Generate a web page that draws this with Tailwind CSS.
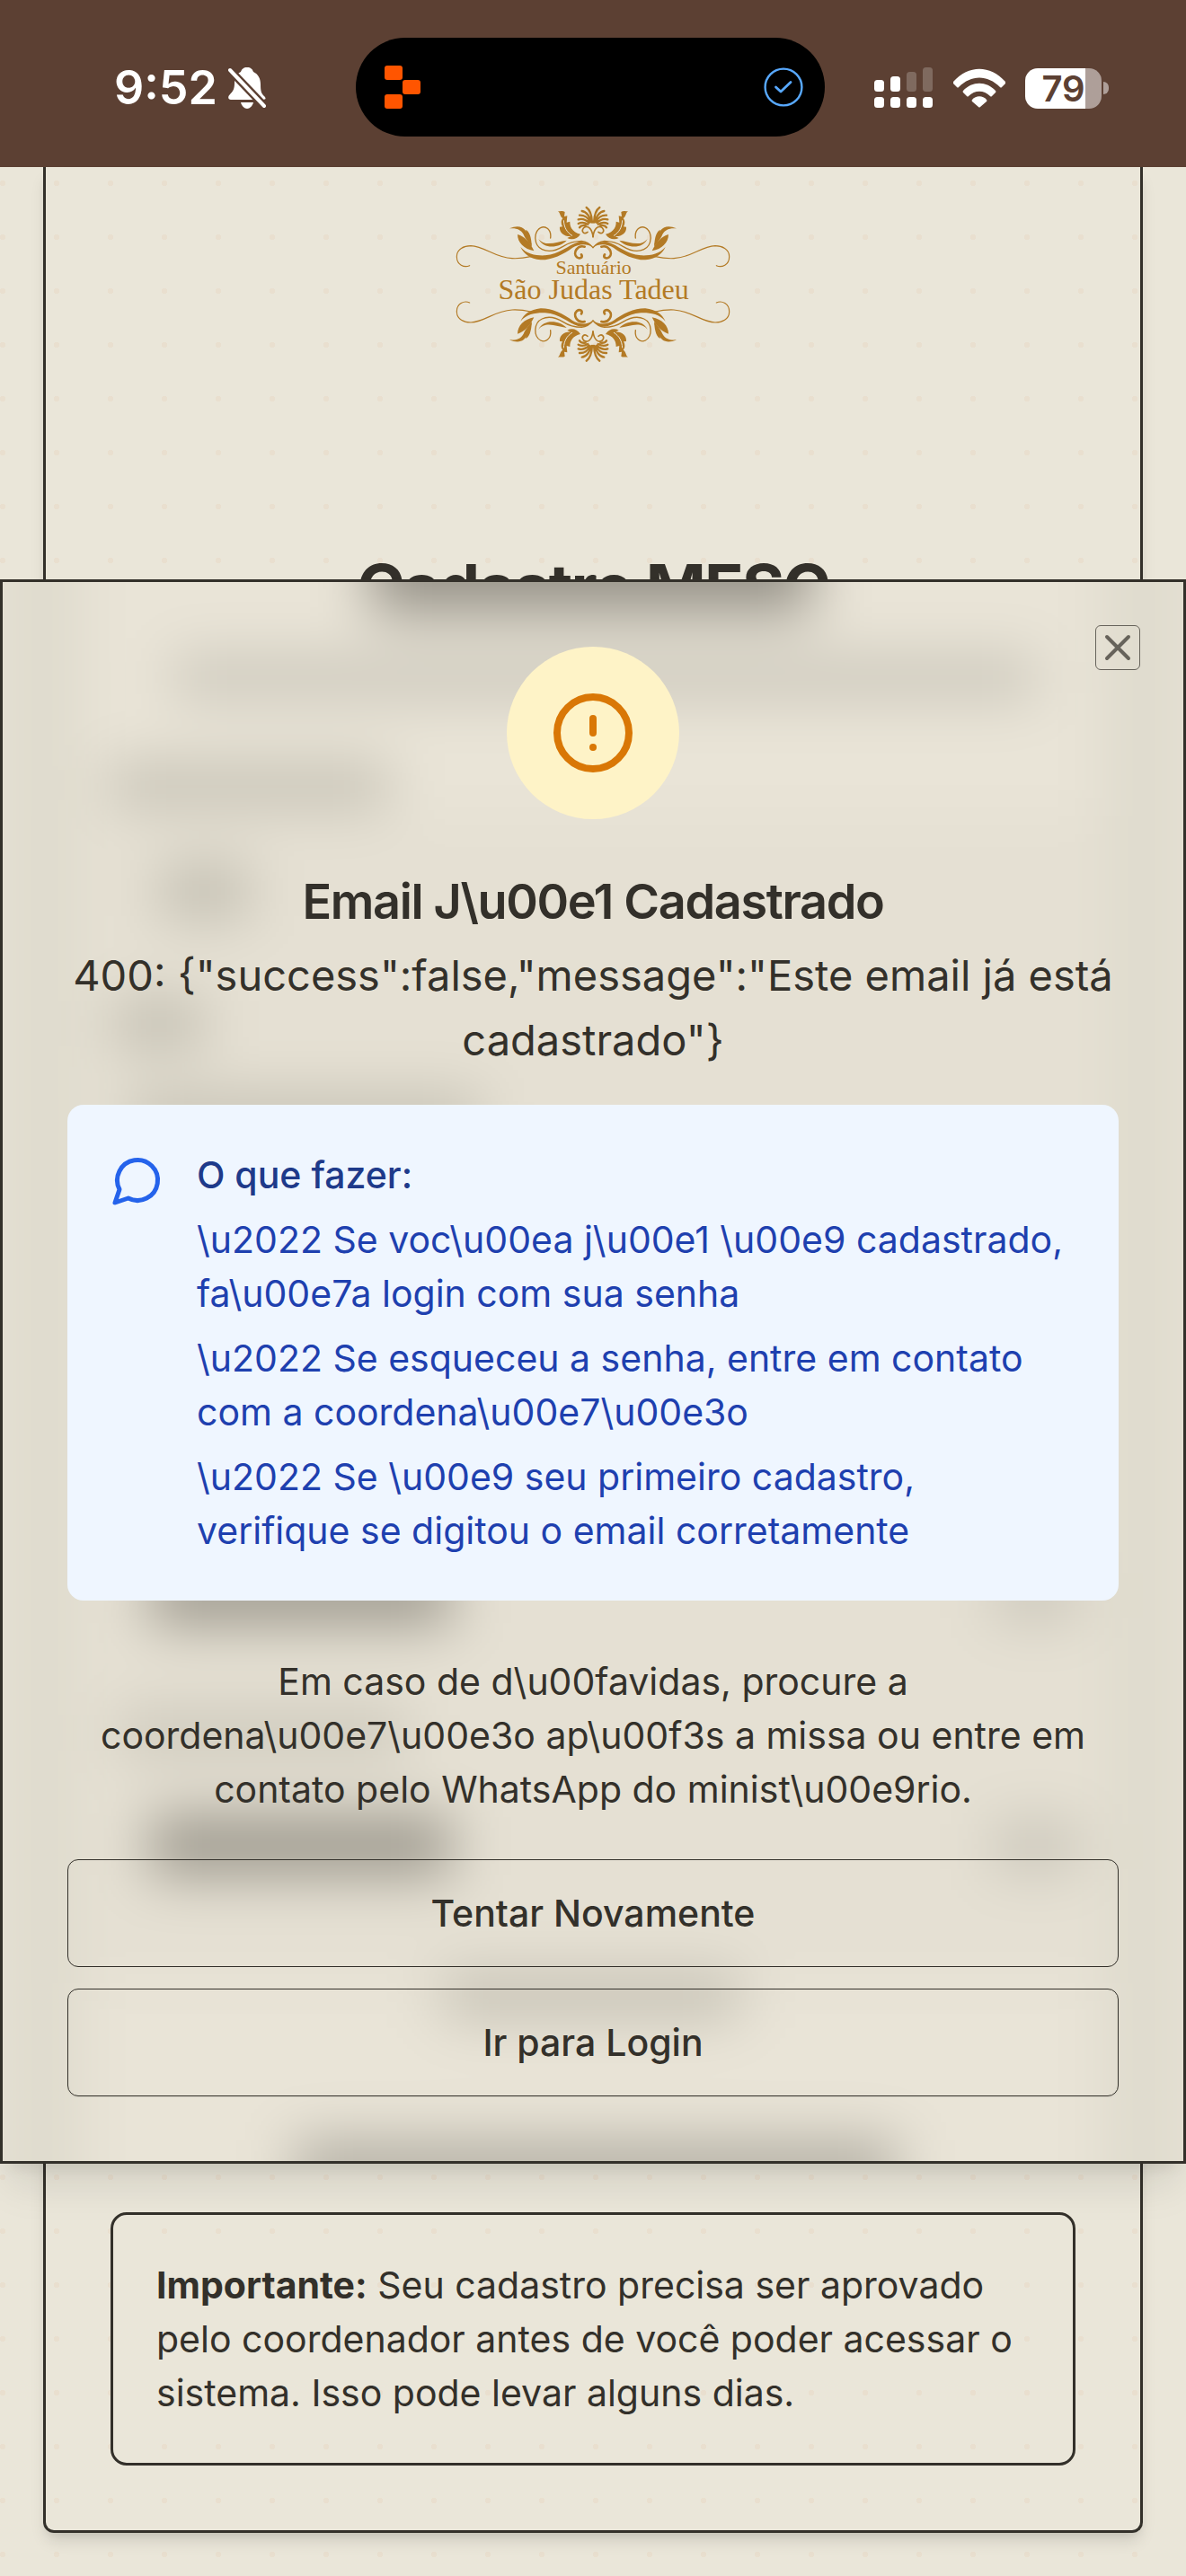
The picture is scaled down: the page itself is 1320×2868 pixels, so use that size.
<!DOCTYPE html>
<html lang="pt-BR">
<head>
<meta charset="utf-8">
<meta name="viewport" content="width=device-width, initial-scale=1">
<title>Cadastro MESC</title>
<script src="https://cdn.jsdelivr.net/npm/@tailwindcss/browser@4"></script>
</head>
<body class="flex min-h-screen flex-col bg-[#eae6d9] font-['Inter',sans-serif] text-[41px] leading-[60px] text-[#33302a]">

<!-- Phone status bar -->
<header class="relative flex h-[186px] items-center justify-between bg-[#5c4033] pt-[10px] pr-[86px] pl-[127px] text-white">
  <div class="flex items-center gap-3">
    <time class="text-[52px] leading-none font-semibold">9:52</time>
    <svg class="h-[46px] w-[42px]" viewBox="0 0 42 46" fill="currentColor" aria-hidden="true">
      <path d="M21 0c4 0 6 2 7 5 6 3 8 8 8 14 0 8 1 10 4 13s1 4-1 4H3c-3 0-4-3-1-6 3-3 5-6 5-12C7 12 9 7 14 5 15 2 17 0 21 0Z"/>
      <path d="M14 39h14c-1 4-4 7-7 7s-6-3-7-7Z"/>
      <path d="M-1 0 43 46" fill="none" stroke="#5c4033" stroke-width="9"/>
      <path d="M2 3 40 43" fill="none" stroke="currentColor" stroke-width="4" stroke-linecap="round"/>
    </svg>
  </div>
  <div class="absolute top-[42px] left-[396px] flex h-[110px] w-[522px] items-center justify-between rounded-full bg-black pr-6 pl-8">
    <svg class="h-12 w-10" viewBox="0 0 40 48" fill="#ff5500" aria-hidden="true">
      <rect width="20" height="16" rx="3"/><rect x="20" y="16" width="20" height="16" rx="3"/><rect y="32" width="20" height="16" rx="3"/>
    </svg>
    <svg class="size-11" viewBox="0 0 44 44" fill="none" stroke="#58a9ff" aria-hidden="true">
      <circle cx="22" cy="22" r="20.400" stroke-width="2.400"/>
      <path d="m13.500 22 5.500 5L30 16.500" stroke-width="2.800" stroke-linecap="round" stroke-linejoin="round"/>
    </svg>
  </div>
  <div class="flex items-center gap-[22px]">
    <svg class="h-[46px] w-[66px]" viewBox="0 0 66 46" fill="#fff" aria-hidden="true">
      <rect y="14" width="11" height="13" rx="3.500"/><rect x="18" y="10" width="11" height="17" rx="3.500"/>
      <rect x="36" y="5" width="11" height="22" rx="3.500" opacity=".22"/><rect x="54" width="11" height="27" rx="3.500" opacity=".22"/>
      <rect y="33" width="11" height="12" rx="3.500"/><rect x="18" y="33" width="11" height="12" rx="3.500"/><rect x="36" y="33" width="11" height="12" rx="3.500"/><rect x="54" y="33" width="11" height="12" rx="3.500"/>
    </svg>
    <svg class="h-[44px] w-[58px]" viewBox="0 0 58 44" fill="#fff" aria-hidden="true">
      <path d="M0 15C17-4 41-4 58 15q1 1 0 2l-4 4q-1 1-2 0C38 7 20 7 6 21q-1 1-2 0l-4-4q-1-1 0-2Z"/>
      <path d="M11 25c10-11 26-11 36 0q1 1 0 2l-4 4q-1 1-2 0c-7-7-17-7-24 0q-1 1-2 0l-4-4q-1-1 0-2Z"/>
      <path d="M21 35c4-5 12-5 16 0q1 1 0 2l-7 6q-1 1-2 0l-7-6q-1-1 0-2Z"/>
    </svg>
    <div class="flex items-center gap-[2px]">
      <div class="flex h-[45px] w-[85px] items-center justify-center rounded-[14px] bg-linear-to-r from-white from-79% to-[#ae9f99] to-79% text-[40px] leading-[45px] font-semibold text-[#5c4033]">79</div>
      <div class="h-[14px] w-[6px] rounded-r-full bg-[#ae9f99]"></div>
    </div>
  </div>
</header>

<main class="relative flex flex-1 flex-col bg-[radial-gradient(circle,#e9dfcf_3px,transparent_3px)] bg-size-[60px_60px] bg-position-[-27px_-12px] px-12 pb-12">

  <section class="flex flex-1 flex-col rounded-b-xl border-x-3 border-b-3 border-[#33302a] px-[72px] pb-[72px] shadow-[0_12px_18px_-3px_#0000001c,0_6px_12px_-6px_#0000001c]">
    <svg class="mx-auto mt-[29px] h-[200px] w-[340px] shrink-0" viewBox="0 0 1020 600" role="img" aria-label="Santuário São Judas Tadeu">
      <defs>
        <g id="flourish" fill="#b37a25" stroke="#b37a25" stroke-linecap="round" stroke-linejoin="round" stroke-width="0">
          <path fill="none" stroke-width="3.500" d="M98 242C80 250 55 240 55 212C55 186 80 176 102 176C150 178 180 215 240 218C265 219 285 216 302 212"/>
          <path d="M268 180C290 205 320 209 350 208C400 204 425 175 462 163C482 158 500 170 510 182C490 167 462 170 442 182C412 205 370 224 335 223C300 219 280 205 268 180Z"/>
          <path d="M231 118C262 104 283 114 290 136C295 150 297 158 306 172C290 160 284 152 278 138C268 120 252 116 231 118Z"/>
          <path d="M258 138C282 145 300 165 313 193C280 187 258 165 258 138Z"/>
          <path d="M286 122C303 132 304 160 306 178C291 165 284 145 286 122Z"/>
          <path fill="none" stroke-width="4" d="M368 150C372 120 350 108 335 116C310 130 312 175 340 188C365 200 390 190 410 178C430 165 450 160 472 160C490 162 502 172 510 182"/>
          <path d="M328 152C350 182 390 162 422 158C400 182 345 190 328 152Z"/>
          <path fill="none" stroke-width="8" d="M482 179C458 172 441 200 456 214C466 222 478 214 471 205"/>
          <path d="M393 60C402 62 409 58 416 63L414 78L424 76L422 98L433 95C432 116 445 132 468 137C458 154 438 158 424 150L436 144C414 146 397 132 399 113L408 112C402 102 403 90 409 84C399 78 402 68 393 60Z"/>
          <path fill="none" stroke="#eae6d9" stroke-width="3" d="M412 92C414 116 422 130 440 142"/>
          <path fill="none" stroke-width="7" d="M507 98C506 76 500 56 488 48M503 96C500 78 488 62 473 60M500 97C494 82 480 73 465 74M497 99C487 89 474 84 461 88M493 104C482 98 470 97 461 102M485 108C476 107 468 110 465 115"/>
          <path fill="none" stroke-width="5" d="M510 146C507 118 492 106 479 116C469 128 480 140 492 130"/>
        </g>
        <g id="flourish-pair"><use href="#flourish"/><use href="#flourish" transform="matrix(-1 0 0 1 1020 0)"/></g>
      </defs>
      <use href="#flourish-pair"/>
      <use href="#flourish-pair" transform="matrix(1 0 0 -1 0 608)"/>
      <g fill="#b37a25" text-anchor="middle" font-family="'Liberation Serif',serif">
        <text x="512" y="270" font-size="66">Santuário</text>
        <text x="512" y="355" font-size="96">São Judas Tadeu</text>
      </g>
    </svg>
    <h1 class="mt-[191px] text-center text-[72px] leading-[96px] font-bold tracking-tight">Cadastro MESC</h1>
    <p class="mt-auto rounded-[18px] border-3 border-[#33302a] p-12"><strong>Importante:</strong> Seu cadastro precisa ser aprovado pelo coordenador antes de você poder acessar o sistema. Isso pode levar alguns dias.</p>
  </section>

  <!-- Error dialog over the form -->
  <div class="absolute inset-0 flex items-center">
    <div role="dialog" aria-labelledby="dialog-title" class="relative isolate w-full border-3 border-[#33302a] bg-[#e6e1d4] p-[72px] text-center shadow-[0_30px_45px_-9px_#0000001a,0_12px_18px_-12px_#00000020]">
      <svg class="absolute inset-0 -z-10 h-full w-full" viewBox="0 0 1314 1758" preserveAspectRatio="none" aria-hidden="true">
        <defs>
          <filter id="soft" filterUnits="userSpaceOnUse" x="-150" y="-150" width="1614" height="2058" color-interpolation-filters="sRGB"><feGaussianBlur stdDeviation="31"/></filter>
        </defs>
        <g filter="url(#soft)">
          <rect x="-150" y="-150" width="1614" height="2058" fill="#e5e0d3"/>
          <rect x="24" y="-150" width="46" height="2058" fill="#dcd9cb"/><rect x="1244" y="-150" width="46" height="2058" fill="#dcd9cb"/>
          <rect x="100" y="-150" width="1110" height="410" fill="#e9e4d7"/><rect x="100" y="1560" width="1110" height="340" fill="#e9e4d7"/>
          <rect x="410" y="-75" width="490" height="110" fill="#98948a"/>
          <rect x="190" y="82" width="960" height="48" fill="#cbc7bb"/>
          <rect x="120" y="202" width="310" height="48" fill="#c5c1b4"/>
          <rect x="176" y="314" width="98" height="60" fill="#c2beb1"/>
          <rect x="124" y="464" width="100" height="56" fill="#c2beb1"/>
          <rect x="140" y="572" width="390" height="48" fill="#c2beb1"/>
          <rect x="164" y="1094" width="335" height="66" fill="#9c988d"/>
          <rect x="1102" y="1100" width="96" height="56" fill="#cac6ba"/>
          <rect x="130" y="1256" width="320" height="50" fill="#cbc7ba"/>
          <rect x="164" y="1374" width="335" height="66" fill="#9c988d"/>
          <rect x="1102" y="1380" width="96" height="56" fill="#cac6ba"/>
          <rect x="490" y="1552" width="330" height="46" fill="#c2beb1"/>
          <rect x="325" y="1734" width="670" height="66" fill="#b3afa4"/>
        </g>
      </svg>

      <div class="mx-auto flex size-[192px] items-center justify-center rounded-full bg-[#fef3c7]">
        <svg class="size-24" viewBox="0 0 24 24" fill="none" stroke="#d97706" stroke-width="2" stroke-linecap="round" stroke-linejoin="round" aria-hidden="true"><circle cx="12" cy="12" r="10"/><path d="M12 8v4M12 16h.01"/></svg>
      </div>
      <h2 id="dialog-title" class="mt-[50px] text-[54px] leading-[84px] font-semibold tracking-tight">Email J\u00e1 Cadastrado</h2>
      <p class="mt-1 text-[47px] leading-[72px]">400: {"success":false,"message":"Este email já está cadastrado"}</p>

      <div class="mt-9 flex gap-9 rounded-[18px] bg-[#eff6ff] p-12 text-left text-[#1e40af]">
        <svg class="mt-[6px] size-[60px] shrink-0" viewBox="0 0 24 24" fill="none" stroke="#2563eb" stroke-width="2" stroke-linecap="round" stroke-linejoin="round" aria-hidden="true"><path d="M7.900 20A9 9 0 1 0 4 16.100L2 22Z"/></svg>
        <div>
          <h3 class="font-medium text-[#1e3a8a]">O que fazer:</h3>
          <ul class="mt-3 space-y-3">
            <li>\u2022 Se voc\u00ea j\u00e1 \u00e9 cadastrado, fa\u00e7a login com sua senha</li>
            <li>\u2022 Se esqueceu a senha, entre em contato com a coordena\u00e7\u00e3o</li>
            <li>\u2022 Se \u00e9 seu primeiro cadastro, verifique se digitou o email corretamente</li>
          </ul>
        </div>
      </div>

      <p class="mt-[60px]">Em caso de d\u00favidas, procure a coordena\u00e7\u00e3o ap\u00f3s a missa ou entre em contato pelo WhatsApp do minist\u00e9rio.</p>

      <div class="mt-12 flex flex-col gap-6">
        <button type="button" class="h-[120px] rounded-xl border border-[#33302a] font-medium">Tentar Novamente</button>
        <button type="button" class="h-[120px] rounded-xl border border-[#33302a] font-medium shadow-xs">Ir para Login</button>
      </div>

      <button type="button" aria-label="Fechar" class="absolute top-12 right-12 rounded-md border border-[#33302a] opacity-70">
        <svg class="size-12" viewBox="0 0 24 24" fill="none" stroke="currentColor" stroke-width="2" stroke-linecap="round" aria-hidden="true"><path d="M18 6 6 18M6 6l12 12"/></svg>
      </button>
    </div>
  </div>
</main>
</body>
</html>
